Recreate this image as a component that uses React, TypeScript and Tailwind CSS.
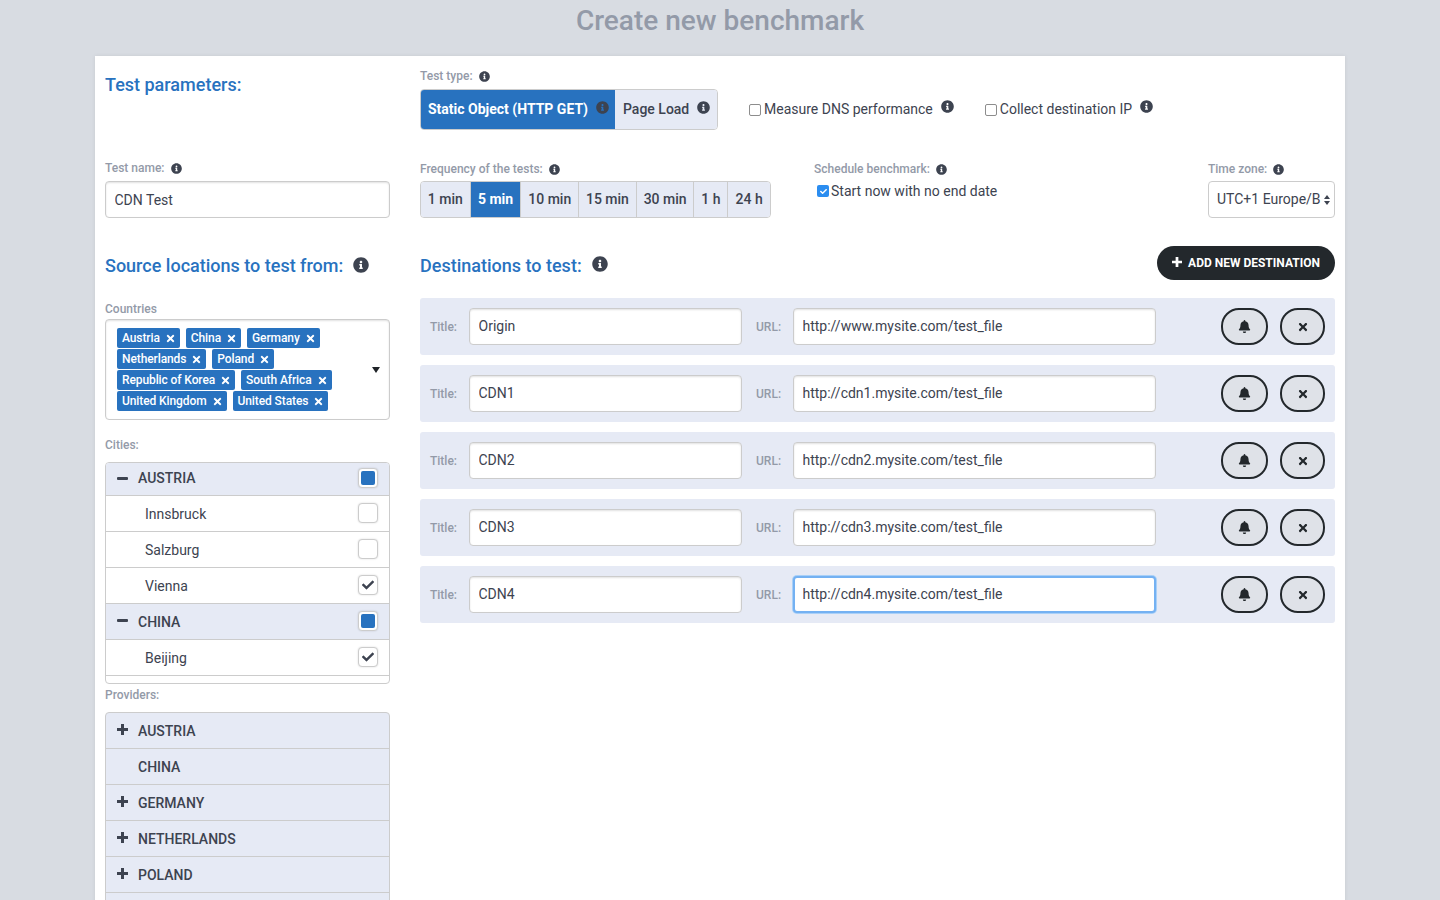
import { FaBell, FaCheck, FaInfoCircle, FaTimes } from "react-icons/fa"

const labelClass = "text-[12px] leading-[14px] font-medium text-[#939aa8]"
const headingClass = "text-[18px] leading-[22px] font-medium text-[#2872bf]"
const inputClass = "h-[37px] rounded-[4px] bg-white text-[14px] text-[#3d4350] outline-none"
const plainInput = "border border-[#ccc] px-[8.5px] shadow-[inset_0_1px_2px_rgba(0,0,0,0.12)]"

const tags = [
  ["Austria", "China", "Germany"],
  ["Netherlands", "Poland"],
  ["Republic of Korea", "South Africa"],
  ["United Kingdom", "United States"],
]

const cities = [
  { name: "AUSTRIA", group: true },
  { name: "Innsbruck", state: "off" },
  { name: "Salzburg", state: "off" },
  { name: "Vienna", state: "on" },
  { name: "CHINA", group: true },
  { name: "Beijing", state: "on" },
]

const providers = [
  { name: "AUSTRIA", plus: true },
  { name: "CHINA", plus: false },
  { name: "GERMANY", plus: true },
  { name: "NETHERLANDS", plus: true },
  { name: "POLAND", plus: true },
  { name: "", plus: false },
]

const destinations = [
  { title: "Origin", url: "http://www.mysite.com/test_file" },
  { title: "CDN1", url: "http://cdn1.mysite.com/test_file" },
  { title: "CDN2", url: "http://cdn2.mysite.com/test_file" },
  { title: "CDN3", url: "http://cdn3.mysite.com/test_file" },
  { title: "CDN4", url: "http://cdn4.mysite.com/test_file", focused: true },
]

const frequencies = [
  { label: "1 min", w: "w-[50px]" },
  { label: "5 min", w: "w-[51px]", active: true },
  { label: "10 min", w: "w-[58px]" },
  { label: "15 min", w: "w-[58px]" },
  { label: "30 min", w: "w-[58px]" },
  { label: "1 h", w: "w-[34px]" },
  { label: "24 h", w: "w-[42px]" },
]

function Info({ className = "" }: { className?: string }) {
  return <FaInfoCircle className={`shrink-0 text-[#3d4350] ${className}`} />
}

function Plus({ className = "" }: { className?: string }) {
  return (
    <svg viewBox="0 0 11 11" className={`fill-current ${className}`}>
      <path d="M4 0h3v4h4v3H7v4H4V7H0V4h4z" />
    </svg>
  )
}

function BoxCheck({ state }: { state: string }) {
  return (
    <span className="flex h-[20px] w-[20px] -translate-y-[1px] items-center justify-center rounded-[4px] border border-[#ccc] bg-white shadow-[0_0_2px_rgba(0,0,0,0.15)]">
      {state === "on" && <FaCheck className="text-[12px] text-[#3d4350]" />}
      {state === "mixed" && <span className="h-[14px] w-[14px] rounded-[2px] bg-[#2872bf]" />}
    </span>
  )
}

function SourceColumn() {
  return (
    <div className="w-[285px] shrink-0">
      <h2 className={`${headingClass} mt-[18px]`}>Test parameters:</h2>
      <div className={`${labelClass} mt-[65px] flex items-center gap-[6px]`}>
        Test name: <Info className="text-[11px]" />
      </div>
      <input readOnly defaultValue="CDN Test" className={`${inputClass} ${plainInput} mt-[6px] w-[285px]`} />
      <div className="mt-[37px] flex items-center gap-[10px]">
        <h2 className={headingClass}>Source locations to test from:</h2>
        <Info className="-translate-y-[1px] text-[16px]" />
      </div>
      <div className={`${labelClass} mt-[25px]`}>Countries</div>
      <div className="relative mt-[3px] h-[101px] rounded-[4px] border border-[#ccc] pl-[11px] pt-[8px] shadow-[inset_0_1px_2px_rgba(0,0,0,0.12)]">
        {tags.map((row) => (
          <div key={row[0]} className="mb-[1px] flex h-[20px] gap-[6px]">
            {row.map((t) => (
              <span
                key={t}
                className="flex items-center gap-[5px] rounded-[2px] bg-[#2872bf] pl-[5px] pr-[4px] text-[12px] font-medium tracking-[-0.1px] text-white"
              >
                {t} <FaTimes className="text-[11px]" />
              </span>
            ))}
          </div>
        ))}
        <span className="absolute right-[9px] top-[47px] h-0 w-0 border-x-[4px] border-t-[6px] border-x-transparent border-t-[#1f2328]" />
      </div>
      <div className={`${labelClass} mt-[18px]`}>Cities:</div>
      <div className="mt-[10px] h-[222px] overflow-hidden rounded-[4px] border border-[#ccc]">
        {cities.map((c, i) =>
          c.group ? (
            <div
              key={c.name}
              className={`flex items-center border-b border-[#ccc] bg-[#e6eaf5] pl-[11px] pr-[11px] ${i === 0 ? "h-[33px]" : "h-[36px]"}`}
            >
              <span className="h-[3px] w-[11px] -translate-y-[1px] rounded-[1px] bg-[#3d4350]" />
              <span
                className={`ml-[10px] flex-1 text-[14px] font-medium text-[#3d4350] ${i === 0 ? "-translate-y-[1px]" : "translate-y-[1px]"}`}
              >
                {c.name}
              </span>
              <BoxCheck state="mixed" />
            </div>
          ) : (
            <div key={c.name} className="flex h-[36px] items-center border-b border-[#ccc] pl-[39px] pr-[11px]">
              <span className="flex-1 translate-y-[1px] text-[14px] text-[#3d4350]">{c.name}</span>
              <BoxCheck state={c.state ?? "off"} />
            </div>
          ),
        )}
      </div>
      <div className={`${labelClass} mt-[4px]`}>Providers:</div>
      <div className="mt-[10px] rounded-t-[4px] border border-[#ccc] bg-[#e6eaf5]">
        {providers.map((p, i) => (
          <div key={i} className="flex h-[36px] items-center border-b border-[#ccc] pl-[11px]">
            <span className="w-[11px]">{p.plus && <Plus className="h-[11px] w-[11px] -translate-y-[1px] text-[#3d4350]" />}</span>
            <span className="ml-[10px] translate-y-[1px] text-[14px] font-medium text-[#3d4350]">{p.name}</span>
          </div>
        ))}
      </div>
    </div>
  )
}

function DestinationRow({ title, url, focused }: { title: string; url: string; focused?: boolean }) {
  return (
    <div className="flex h-[57px] items-center rounded-[3px] bg-[#e6eaf5] pl-[10px] pr-[10px]">
      <span className={`${labelClass} w-[39px]`}>Title:</span>
      <input readOnly defaultValue={title} className={`${inputClass} ${plainInput} w-[273px] pb-[2px]`} />
      <span className={`${labelClass} ml-[14px] w-[37px]`}>URL:</span>
      <input
        readOnly
        defaultValue={url}
        className={`${inputClass} w-[363px] pb-[2px] ${
          focused ? "border-2 border-[#74b1f2] px-[7.5px] shadow-[0_0_0_1px_#a9d0f8]" : plainInput
        }`}
      />
      <button className="ml-[65px] flex h-[37px] w-[47px] items-center justify-center rounded-[18px] border-2 border-[#23282c] bg-[#dfe2e8] text-[13px] text-[#23282c]">
        <FaBell />
      </button>
      <button className="ml-[12px] flex h-[37px] w-[45px] items-center justify-center rounded-[18px] border-2 border-[#23282c] bg-[#dfe2e8] text-[12px] text-[#23282c]">
        <FaTimes />
      </button>
    </div>
  )
}

function TestColumn() {
  return (
    <div className="w-[915px] shrink-0">
      <div className={`${labelClass} mt-[13px] flex items-center gap-[6px]`}>
        Test type: <Info className="text-[11px]" />
      </div>
      <div className="mt-[6px] flex h-[41px] items-start">
        <div className="flex h-[41px] overflow-hidden rounded-[4px] border border-[#ccc] text-[14px]">
          <div className="flex w-[194px] items-center bg-[#2872bf] pl-[7px] font-bold text-white">
            Static Object (HTTP GET)
            <Info className="ml-[8px] -translate-y-[2px] text-[13px]" />
          </div>
          <div className="flex w-[102px] items-center bg-[#e6eaf5] pl-[8px] font-medium text-[#3d4350]">
            Page Load
            <Info className="ml-[8px] -translate-y-[2px] text-[13px]" />
          </div>
        </div>
        <label className="ml-[31px] mt-[10px] flex items-center text-[14px] text-[#3d4350]">
          <span className="mr-[3px] h-[12px] w-[12px] rounded-[2px] border border-[#8d8d8d] bg-white" />
          Measure DNS performance
          <Info className="ml-[8px] -translate-y-[3px] text-[13px]" />
        </label>
        <label className="ml-[31px] mt-[10px] flex items-center text-[14px] text-[#3d4350]">
          <span className="mr-[3px] h-[12px] w-[12px] rounded-[2px] border border-[#8d8d8d] bg-white" />
          Collect destination IP
          <Info className="ml-[8px] -translate-y-[3px] text-[13px]" />
        </label>
      </div>
      <div className="mt-[32px] flex">
        <div className="w-[394px]">
          <div className={`${labelClass} flex items-center gap-[6px]`}>
            Frequency of the tests: <Info className="text-[11px]" />
          </div>
          <div className="mt-[5px] flex h-[37px] w-[351px] overflow-hidden rounded-[4px] border border-[#ccc] text-[14px] font-medium text-[#3d4350]">
            {frequencies.map((f) => (
              <div
                key={f.label}
                className={`flex items-center justify-center border-r border-[#ccc] last:border-r-0 ${f.w} ${
                  f.active ? "bg-[#2872bf] font-bold text-white" : "bg-[#e6eaf5]"
                }`}
              >
                {f.label}
              </div>
            ))}
          </div>
        </div>
        <div className="w-[394px]">
          <div className={`${labelClass} flex items-center gap-[6px]`}>
            Schedule benchmark: <Info className="text-[11px]" />
          </div>
          <div className="ml-[3px] mt-[7px] flex items-center text-[14px] leading-[16px] text-[#3d4350]">
            <span className="mr-[2px] flex h-[12px] w-[12px] items-center justify-center rounded-[2px] bg-[#2b8df0]">
              <FaCheck className="text-[7px] text-white" />
            </span>
            Start now with no end date
          </div>
        </div>
        <div className="w-[127px]">
          <div className={`${labelClass} flex items-center gap-[6px]`}>
            Time zone: <Info className="text-[11px]" />
          </div>
          <div className="mt-[5px] flex h-[37px] w-[127px] items-center rounded-[4px] border border-[#ccc] pl-[8px] text-[14px] text-[#3d4350]">
            <span className="w-[107px] whitespace-nowrap">UTC+1 Europe/B</span>
            <span className="flex flex-col gap-[2px]">
              <span className="h-0 w-0 border-x-[3px] border-b-[4px] border-x-transparent border-b-[#3d4350]" />
              <span className="h-0 w-0 border-x-[3px] border-t-[4px] border-x-transparent border-t-[#3d4350]" />
            </span>
          </div>
        </div>
      </div>
      <div className="mt-[28px] flex h-[34px] items-center">
        <h2 className={`${headingClass} translate-y-[3px]`}>Destinations to test:</h2>
        <Info className="ml-[10px] translate-y-[1px] text-[16px]" />
        <button className="ml-auto flex h-[34px] w-[178px] items-center justify-center gap-[6px] rounded-[17px] bg-[#23282c] text-[12px] font-bold text-white">
          <Plus className="h-[10px] w-[10px] -translate-y-[1px]" /> ADD NEW DESTINATION
        </button>
      </div>
      <div className="mt-[18px] flex flex-col gap-[10px]">
        {destinations.map((d) => (
          <DestinationRow key={d.title} {...d} />
        ))}
      </div>
    </div>
  )
}

export default function App() {
  return (
    <div className="h-[900px] overflow-hidden bg-[#d8dce2] font-['Roboto',sans-serif]">
      <h1 className="h-[56px] pt-[3px] text-center text-[28px] leading-[36px] font-medium text-[#939aa8]">
        Create new benchmark
      </h1>
      <div className="mx-auto flex w-[1250px] gap-[30px] bg-white px-[10px] shadow-[0_0_4px_rgba(0,0,0,0.08)]">
        <SourceColumn />
        <TestColumn />
      </div>
    </div>
  )
}
